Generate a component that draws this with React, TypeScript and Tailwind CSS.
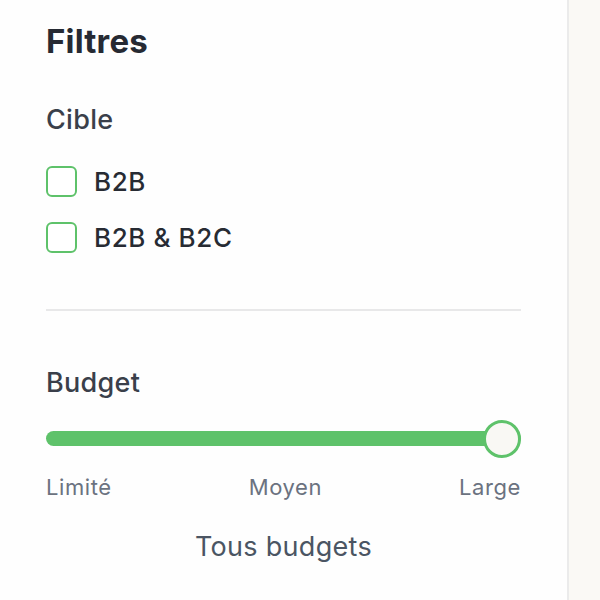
import { useState } from "react";

export default function App() {
  const [cible, setCible] = useState<string[]>([]);
  const [budget, setBudget] = useState(2);

  const toggle = (v: string) =>
    setCible((c) => (c.includes(v) ? c.filter((x) => x !== v) : [...c, v]));

  const labels = ["Limité", "Moyen", "Large"];
  const pct = (budget / 2) * 100;

  return (
    <div className="flex h-[600px] w-[600px] font-['Inter',_'Liberation_Sans',_sans-serif]">
      <aside className="w-[569px] shrink-0 bg-[#fefefe] border-r-2 border-[#ebebeb] pl-[46px] pr-[46px] pt-[25px]">
        <h1 className="text-[33px] font-bold leading-none tracking-[0.2px] text-[#262a33]">
          Filtres
        </h1>

        <div className="mt-[48px]">
          <h2 className="text-[27px] font-medium leading-none tracking-[0.3px] text-[#3a3f4a]">
            Cible
          </h2>
          <div className="mt-[33px] flex flex-col gap-[25px]">
            {["B2B", "B2B & B2C"].map((v) => (
              <label key={v} className="flex items-center gap-[17px] cursor-pointer">
                <span
                  onClick={() => toggle(v)}
                  className={
                    "h-[31px] w-[31px] rounded-[6px] border-2 border-[#5ec26a] " +
                    (cible.includes(v) ? "bg-[#5ec26a]" : "bg-white")
                  }
                />
                <span className="text-[26px] font-medium leading-none tracking-[0.6px] text-[#272b33]">
                  {v}
                </span>
              </label>
            ))}
          </div>
        </div>

        <div className="mt-[56px] h-[2px] bg-[#e8e8e9]" />

        <div className="mt-[58px]">
          <h2 className="text-[27px] font-medium leading-none tracking-[0.3px] text-[#3a3f4a]">
            Budget
          </h2>
          <div className="relative mt-[24px] h-[38px]">
            <div className="absolute left-0 right-0 top-[11px] h-[15px] rounded-full bg-[#5ec26a]" />
            <div
              className="absolute top-0 h-[38px] w-[38px] -translate-x-full rounded-full border-[3px] border-[#5ec26a] bg-[#f9f8f4]"
              style={{ left: `${pct}%` }}
            />
          </div>
          <div className="mt-[18px] flex justify-between text-[22px] leading-none tracking-[0.6px] text-[#6b7280]">
            {labels.map((l, i) => (
              <span key={l} onClick={() => setBudget(i)} className="cursor-pointer">
                {l}
              </span>
            ))}
          </div>
          <p className="mt-[35px] text-center text-[27px] leading-none tracking-[0.3px] text-[#4b5563]">
            Tous budgets
          </p>
        </div>
      </aside>
      <main className="flex-1 bg-[#faf9f5]" />
    </div>
  );
}
